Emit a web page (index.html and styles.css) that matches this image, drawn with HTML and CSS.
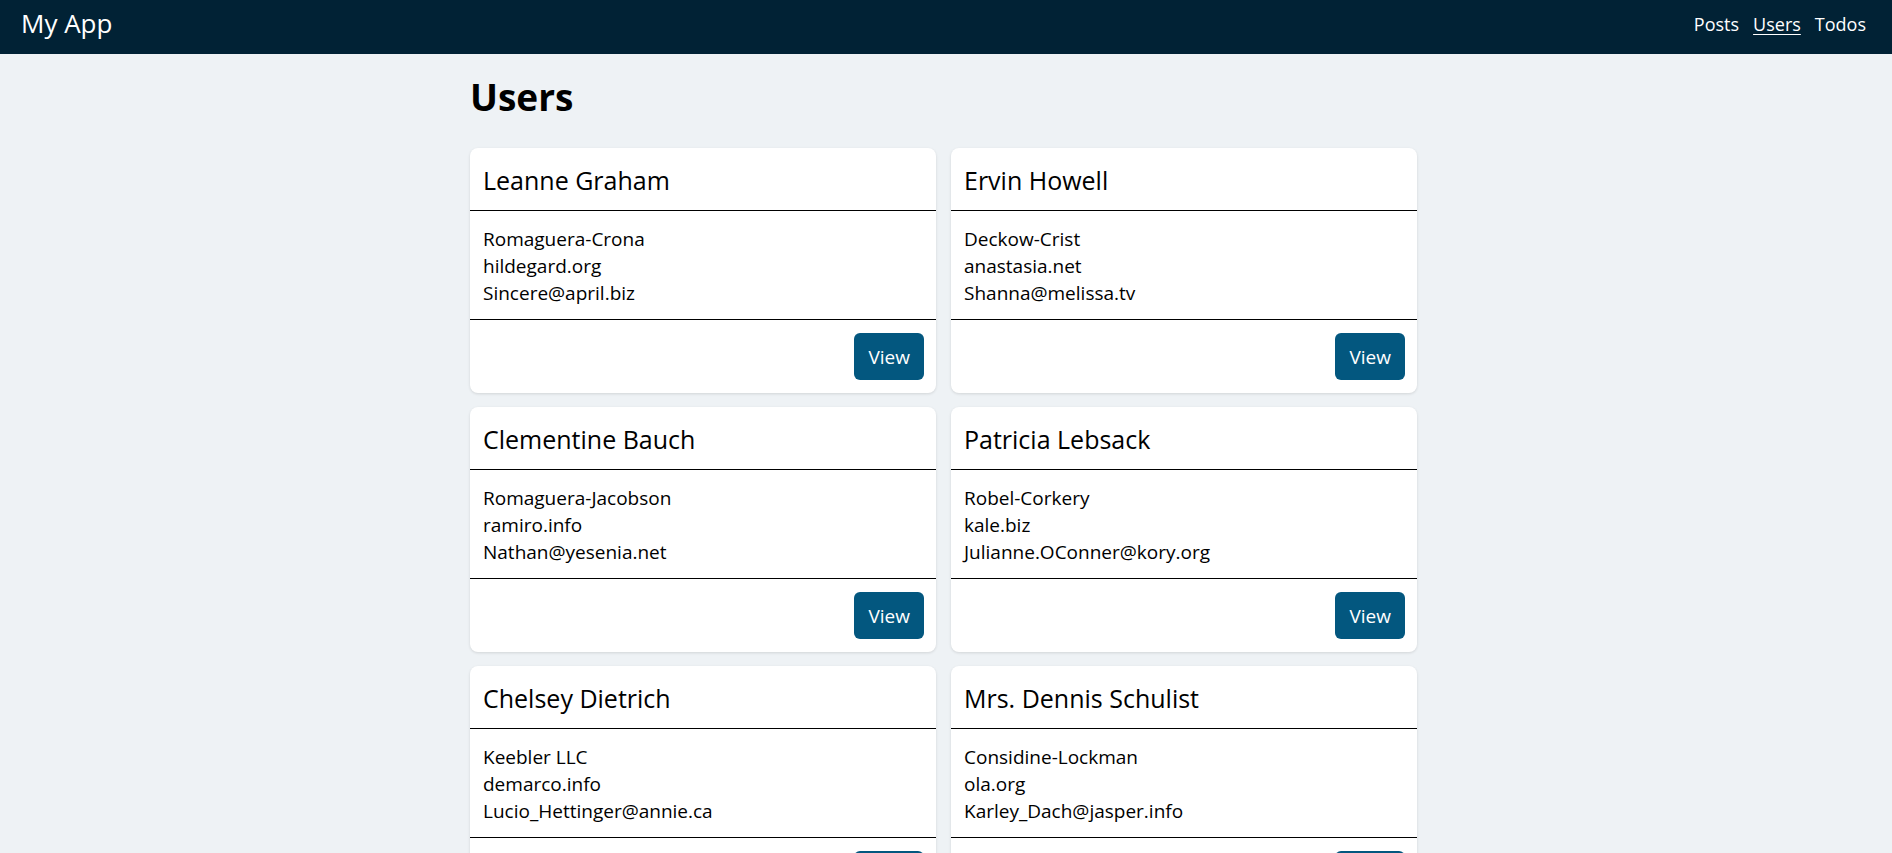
FILE: index.html
```html
<!DOCTYPE html>
<html lang="en">
<head>
<meta charset="utf-8">
<title>My App</title>
<link rel="stylesheet" href="styles.css">
</head>
<body>
<header class="navbar">
  <a class="brand" href="#">My App</a>
  <nav class="nav-links">
    <a href="#">Posts</a>
    <a href="#" class="active">Users</a>
    <a href="#">Todos</a>
  </nav>
</header>
<main class="container">
  <h1 class="page-title">Users</h1>
  <div class="card-grid">
    <article class="card">
      <div class="card-header">Leanne Graham</div>
      <div class="card-body"><div>Romaguera-Crona</div><div>hildegard.org</div><div>Sincere@april.biz</div></div>
      <div class="card-footer"><button class="btn">View</button></div>
    </article>
    <article class="card">
      <div class="card-header">Ervin Howell</div>
      <div class="card-body"><div>Deckow-Crist</div><div>anastasia.net</div><div>Shanna@melissa.tv</div></div>
      <div class="card-footer"><button class="btn">View</button></div>
    </article>
    <article class="card">
      <div class="card-header">Clementine Bauch</div>
      <div class="card-body"><div>Romaguera-Jacobson</div><div>ramiro.info</div><div>Nathan@yesenia.net</div></div>
      <div class="card-footer"><button class="btn">View</button></div>
    </article>
    <article class="card">
      <div class="card-header">Patricia Lebsack</div>
      <div class="card-body"><div>Robel-Corkery</div><div>kale.biz</div><div>Julianne.OConner@kory.org</div></div>
      <div class="card-footer"><button class="btn">View</button></div>
    </article>
    <article class="card">
      <div class="card-header">Chelsey Dietrich</div>
      <div class="card-body"><div>Keebler LLC</div><div>demarco.info</div><div>Lucio_Hettinger@annie.ca</div></div>
      <div class="card-footer"><button class="btn">View</button></div>
    </article>
    <article class="card">
      <div class="card-header">Mrs. Dennis Schulist</div>
      <div class="card-body"><div>Considine-Lockman</div><div>ola.org</div><div>Karley_Dach@jasper.info</div></div>
      <div class="card-footer"><button class="btn">View</button></div>
    </article>
    <article class="card">
      <div class="card-header">Kurtis Weissnat</div>
      <div class="card-body"><div>Johns Group</div><div>elvis.io</div><div>Telly.Hoeger@billy.biz</div></div>
      <div class="card-footer"><button class="btn">View</button></div>
    </article>
    <article class="card">
      <div class="card-header">Nicholas Runolfsdottir V</div>
      <div class="card-body"><div>Abernathy Group</div><div>jacynthe.com</div><div>Sherwood@rosamond.me</div></div>
      <div class="card-footer"><button class="btn">View</button></div>
    </article>
    <article class="card">
      <div class="card-header">Glenna Reichert</div>
      <div class="card-body"><div>Yost and Sons</div><div>conrad.com</div><div>Chaim_McDermott@dana.io</div></div>
      <div class="card-footer"><button class="btn">View</button></div>
    </article>
    <article class="card">
      <div class="card-header">Clementina DuBuque</div>
      <div class="card-body"><div>Hoeger LLC</div><div>ambrose.net</div><div>Rey.Padberg@karina.biz</div></div>
      <div class="card-footer"><button class="btn">View</button></div>
    </article>
  </div>
</main>
</body>
</html>
```
FILE: styles.css
```css
* { box-sizing: border-box; }

html, body {
  margin: 0;
  padding: 0;
}

body {
  background: #eef2f5;
  color: #000;
  font-family: "Segoe UI", "Open Sans", "Noto Sans", sans-serif;
  font-size: 19px;
  line-height: 27px;
}

.navbar {
  height: 54px;
  background: #012235;
  display: flex;
  align-items: center;
  justify-content: space-between;
  padding: 0 26px 5px 21px;
}

.brand {
  color: #fff;
  text-decoration: none;
  font-size: 26px;
  line-height: 32px;
  margin-bottom: 3px;
}

.nav-links {
  display: flex;
  gap: 14px;
}

.nav-links a {
  color: #fff;
  text-decoration: none;
  font-size: 18px;
  line-height: 27px;
}

.nav-links a.active {
  text-decoration: underline;
  text-underline-offset: 3px;
}

.container {
  max-width: 952px;
  margin: 0 auto;
  padding-right: 5px;
}

.page-title {
  font-size: 37px;
  line-height: 48px;
  font-weight: 700;
  margin: 19px 0 27px 0;
}

.card-grid {
  display: grid;
  grid-template-columns: 1fr 1fr;
  gap: 14px 15px;
}

.card {
  background: #fff;
  border-radius: 8px;
  box-shadow: 0 1px 3px rgba(0, 0, 0, 0.12);
  overflow: hidden;
}

.card-header {
  font-size: 25px;
  line-height: 32px;
  padding: 16px 13px 14px;
  border-bottom: 1px solid #000;
}

.card-body {
  padding: 15px 13px 12px;
  border-bottom: 1px solid #000;
}

.card-footer {
  display: flex;
  justify-content: flex-end;
  padding: 13px 12px 13px 13px;
}

.btn {
  font-family: inherit;
  font-size: 19px;
  line-height: 30px;
  color: #fff;
  background: #03577f;
  border: none;
  border-radius: 6px;
  padding: 9px 14px 8px;
  cursor: pointer;
}
```
